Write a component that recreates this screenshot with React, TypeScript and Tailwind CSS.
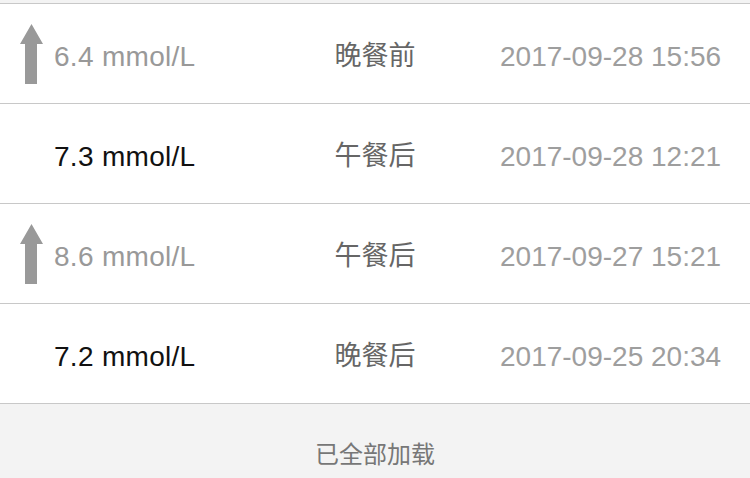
const records = [
  { value: '6.4 mmol/L', meal: '晚餐前', time: '2017-09-28 15:56', high: true },
  { value: '7.3 mmol/L', meal: '午餐后', time: '2017-09-28 12:21', high: false },
  { value: '8.6 mmol/L', meal: '午餐后', time: '2017-09-27 15:21', high: true },
  { value: '7.2 mmol/L', meal: '晚餐后', time: '2017-09-25 20:34', high: false },
]

function UpArrow() {
  return (
    <svg width="23" height="60" viewBox="0 0 23 60" className="shrink-0">
      <path d="M11.5 0 L23 20 L17 20 L17 60 L5 60 L5 20 L0 20 Z" fill="#999999" />
    </svg>
  )
}

export default function App() {
  return (
    <div
      className="w-[750px] h-[478px] overflow-hidden bg-[#f3f3f3]"
      style={{ fontFamily: '"Liberation Sans", "Noto Sans CJK SC", sans-serif' }}
    >
      <div className="h-[3px]" />
      <div className="bg-white border-t border-[#c8c8c8]">
        {records.map((r, i) => (
          <div
            key={i}
            className="grid grid-cols-3 items-center h-[100px] border-b border-[#c8c8c8]"
          >
            {/* value */}
            <div className="flex items-center pl-[20px] gap-[11px]">
              {r.high ? <UpArrow /> : <div className="w-[23px] h-[60px]" />}
              <span
                className={`pt-[6px] whitespace-nowrap text-[28px] tracking-[0.3px] ${r.high ? 'text-[#999999]' : 'text-[#111111]'}`}
              >
                {r.value}
              </span>
            </div>
            {/* meal */}
            <div className="pt-[6px] text-center text-[27px] text-[#666666]">{r.meal}</div>
            {/* time */}
            <div className="pt-[6px] text-right pr-[31px] text-[28px] text-[#9e9e9e] whitespace-nowrap">
              {r.time}
            </div>
          </div>
        ))}
      </div>
      <div className="pt-[33px] text-center text-[24px] text-[#777777]">已全部加载</div>
    </div>
  )
}
